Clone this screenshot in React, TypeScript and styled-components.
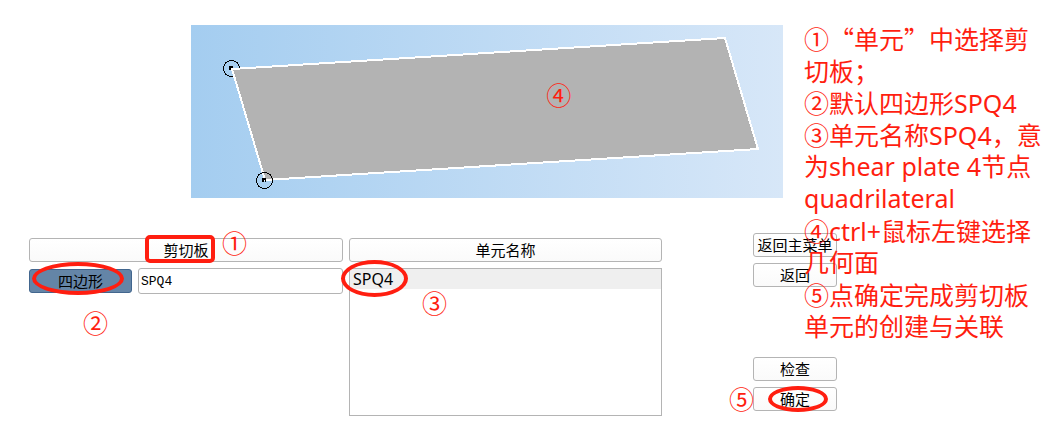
import React from "react";
import styled, { createGlobalStyle } from "styled-components";

const RED = "#ff1e10";
const CJK = '"Noto Sans CJK SC", sans-serif';
const LATIN = '"Noto Sans", "Noto Sans CJK SC", sans-serif';

const GlobalStyle = createGlobalStyle`
  *, *::before, *::after { box-sizing: border-box; }
  body { margin: 0; background: #fff; color: #000; font-family: ${CJK}; }
`;

const Page = styled.main`
  position: relative;
  padding: 25px 0 8px;
`;

const Viewport = styled.section`
  position: relative;
  height: 173px;
  margin: 0 271px 35px 191px;
  background: linear-gradient(90deg, #a4cdf0, #d7e7f8);
`;

const Scene = styled.svg`
  display: block;
  width: 100%;
  height: 100%;
`;

const Panel = styled.section`
  display: grid;
  grid-template-columns: minmax(0, 314fr) minmax(0, 313fr) 169px;
  column-gap: 6px;
  padding: 0 217px 0 29px;
`;

const Column = styled.div`
  display: flex;
  flex-direction: column;
  gap: 6px;
  padding-top: 5px;
`;

const Actions = styled.div`
  display: flex;
  flex-direction: column;
  gap: 6px;
  padding-left: 85px;
`;

const Spacer = styled.div`
  height: 58px;
`;

const Button = styled.button<{ $active?: boolean }>`
  position: relative;
  flex: none;
  height: 24px;
  padding: 0;
  border: 1px solid ${(p) => (p.$active ? "#42668e" : "#b4b4b4")};
  border-radius: 3px;
  background: ${(p) => (p.$active ? "#6485a7" : "linear-gradient(#fff, #fafafa)")};
  color: #000;
  font: 15px/22px ${CJK};
  white-space: nowrap;
`;

const ShapeButton = styled(Button)`
  width: 103px;
`;

const ShapeRow = styled.div`
  position: relative;
  display: flex;
  align-items: center;
  gap: 6px;
`;

const NameInput = styled.input`
  flex: 1;
  min-width: 0;
  height: 26px;
  padding: 0 2px;
  border: 1px solid #b4b4b4;
  border-radius: 3px;
  background: #fff;
  color: #000;
  font: 13px/24px "Liberation Mono", monospace;
`;

const ElementList = styled.ul`
  position: relative;
  height: 148px;
  margin: 0;
  padding: 0;
  border: 1px solid #b4b4b4;
  list-style: none;
`;

const ElementItem = styled.li`
  padding: 0 3px;
  background: #efefef;
  font: 16px/20px ${LATIN};
`;

const Mark = styled.span<{ $x: number; $y: number }>`
  position: absolute;
  left: ${(p) => p.$x}px;
  top: ${(p) => p.$y}px;
  color: ${RED};
  font: 25px/32px ${CJK};
  pointer-events: none;
`;

const CanvasMark = styled(Mark)`
  left: 60%;
`;

const Outline = styled.span<{ $x: number; $y: number; $w: number; $h: number; $square?: boolean }>`
  position: absolute;
  z-index: 1;
  left: ${(p) => p.$x}px;
  top: ${(p) => p.$y}px;
  width: ${(p) => p.$w}px;
  height: ${(p) => p.$h}px;
  border: 4px solid ${RED};
  border-radius: ${(p) => (p.$square ? "5px" : "50%")};
  pointer-events: none;
`;

const TitleOutline = styled(Outline)`
  left: calc(50% - 41px);
`;

const Notes = styled.aside`
  position: absolute;
  z-index: 2;
  top: 22px;
  right: 0;
  width: 250px;
  color: ${RED};
  font: 25px/32px ${LATIN};
  pointer-events: none;
`;

const NoteLine = styled.div<{ $cjk?: boolean }>`
  height: 32px;
  font-family: ${(p) => (p.$cjk ? CJK : LATIN)};
  white-space: nowrap;
`;

const Num = styled.span`
  font-family: ${CJK};
`;

export default function App() {
  return (
    <>
      <GlobalStyle />
      <Page>
        <Viewport>
          <Scene viewBox="0 0 592 173" preserveAspectRatio="none" aria-hidden="true">
            <g shapeRendering="crispEdges">
              <circle cx="40.5" cy="43.5" r="8" fill="none" stroke="#000" />
              <polygon
                points="41,44 534,13 567,124 74,155"
                fill="#b3b3b3"
                stroke="#fff"
                strokeWidth="2"
              />
              <circle cx="73.5" cy="155.5" r="8" fill="none" stroke="#000" />
              <path d="M38 41h4v2h-2v2h-2zM71 153h4v4h-1v-2h-1v2h-2z" fill="#000" />
            </g>
          </Scene>
          <CanvasMark $x={0} $y={53}>④</CanvasMark>
        </Viewport>

        <Panel>
          <Column>
            <Button type="button">
              剪切板
              <TitleOutline $square $x={0} $y={-4} $w={70} $h={28} />
              <Mark $x={192} $y={-13}>①</Mark>
            </Button>
            <ShapeRow>
              <ShapeButton type="button" $active>
                四边形
              </ShapeButton>
              <NameInput aria-label="四边形" defaultValue="SPQ4" />
              <Outline $x={3} $y={-6} $w={92} $h={33} />
              <Mark $x={54} $y={38}>②</Mark>
            </ShapeRow>
          </Column>

          <Column>
            <Button type="button">单元名称</Button>
            <ElementList aria-label="单元名称">
              <ElementItem>SPQ4</ElementItem>
              <Outline $x={-9} $y={-9} $w={67} $h={37} />
              <Mark $x={72} $y={17}>③</Mark>
            </ElementList>
          </Column>

          <Actions>
            <Button type="button">返回主菜单</Button>
            <Button type="button">返回</Button>
            <Spacer />
            <Button type="button">检查</Button>
            <Button type="button">
              确定
              <Outline $x={14} $y={-2} $w={60} $h={26} />
              <Mark $x={-25} $y={-6}>⑤</Mark>
            </Button>
          </Actions>
        </Panel>

        <Notes>
          <NoteLine $cjk>①“单元”中选择剪</NoteLine>
          <NoteLine $cjk>切板；</NoteLine>
          <NoteLine><Num>②</Num>默认四边形SPQ4</NoteLine>
          <NoteLine><Num>③</Num>单元名称SPQ4，意</NoteLine>
          <NoteLine>为shear plate 4节点</NoteLine>
          <NoteLine>quadrilateral</NoteLine>
          <NoteLine><Num>④</Num>ctrl+鼠标左键选择</NoteLine>
          <NoteLine>几何面</NoteLine>
          <NoteLine><Num>⑤</Num>点确定完成剪切板</NoteLine>
          <NoteLine>单元的创建与关联</NoteLine>
        </Notes>
      </Page>
    </>
  );
}
